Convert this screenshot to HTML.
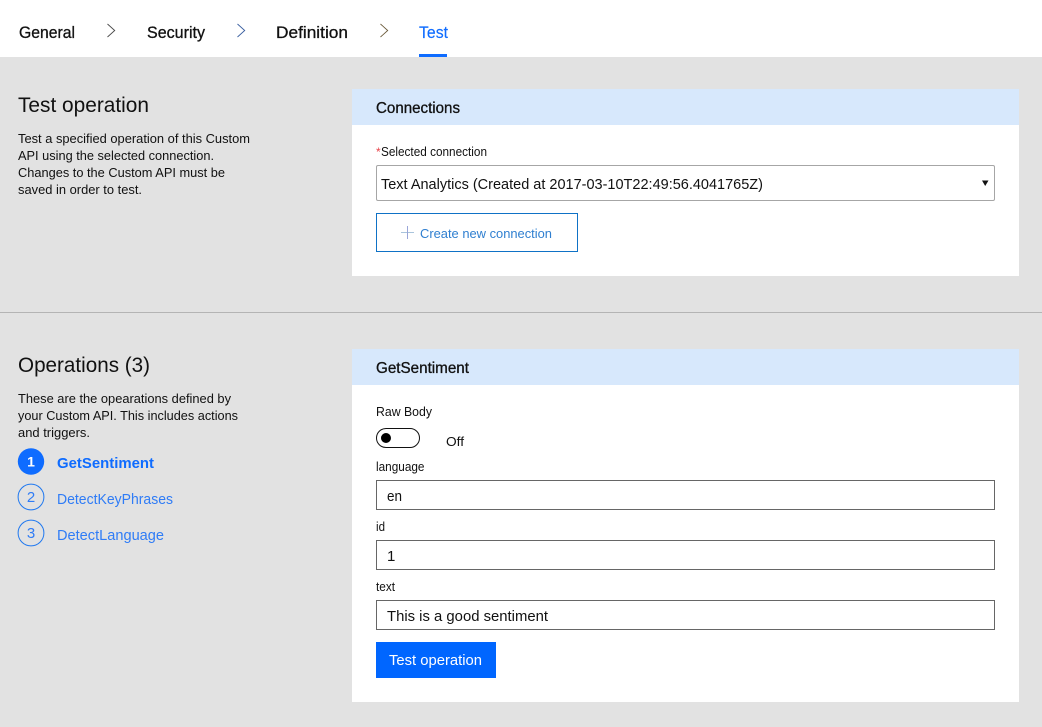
<!DOCTYPE html>
<html>
<head>
<meta charset="utf-8">
<title>Test operation</title>
<style>
html,body{margin:0;padding:0;width:1042px;height:727px;overflow:hidden;background:#e2e2e2}
svg{display:block}
text{font-family:"Liberation Sans",sans-serif;fill:#111}
.s{stroke:#111;stroke-width:.3px}
.b{fill:#0f6cff}
.bs{fill:#0f6cff;stroke:#0f6cff;stroke-width:.4px}
</style>
</head>
<body>
<svg width="1042" height="727" viewBox="0 0 1042 727" xmlns="http://www.w3.org/2000/svg">
<rect width="1042" height="727" fill="#e2e2e2"/>
<rect width="1042" height="57" fill="#fff"/>

<text class="s" x="19" y="38" font-size="16.5" textLength="56" lengthAdjust="spacingAndGlyphs">General</text>
<text class="s" x="147" y="38" font-size="16.5" textLength="58" lengthAdjust="spacingAndGlyphs">Security</text>
<text class="s" x="276" y="38" font-size="16.5" textLength="72" lengthAdjust="spacingAndGlyphs">Definition</text>
<text class="bs" x="419" y="38" font-size="16.5" textLength="29" lengthAdjust="spacingAndGlyphs" style="stroke-width:.15px">Test</text>
<rect x="419" y="54" width="28" height="3" fill="#0f6cff"/>
<path d="M107.5 24L114.7 30.5L107.5 37" fill="none" stroke="#4a4a4a" stroke-width=".9"/>
<path d="M237.5 24L244.7 30.5L237.5 37" fill="none" stroke="#3a5fa0" stroke-width=".9"/>
<path d="M380.5 24L387.7 30.5L380.5 37" fill="none" stroke="#6a5a3a" stroke-width=".9"/>

<text x="18" y="112" font-size="21" textLength="131" lengthAdjust="spacingAndGlyphs">Test operation</text>
<text x="18" y="143" font-size="12.5" textLength="232" lengthAdjust="spacingAndGlyphs">Test a specified operation of this Custom</text>
<text x="18" y="160" font-size="12.5" textLength="196" lengthAdjust="spacingAndGlyphs">API using the selected connection.</text>
<text x="18" y="177" font-size="12.5" textLength="207" lengthAdjust="spacingAndGlyphs">Changes to the Custom API must be</text>
<text x="18" y="194" font-size="12.5" textLength="124" lengthAdjust="spacingAndGlyphs">saved in order to test.</text>

<rect x="352" y="89" width="667" height="187" fill="#fff"/>
<rect x="352" y="89" width="667" height="36" fill="#d7e8fc"/>
<text class="s" x="376" y="113" font-size="15.5" textLength="84" lengthAdjust="spacingAndGlyphs">Connections</text>
<text x="376" y="156" font-size="12" style="fill:#e8434a">*</text>
<text x="381" y="156" font-size="12.5" textLength="106" lengthAdjust="spacingAndGlyphs">Selected connection</text>
<rect x="376.5" y="165.5" width="618" height="35" rx="1.5" fill="#fff" stroke="#a6a6a6"/>
<text x="381" y="189" font-size="15" textLength="382" lengthAdjust="spacingAndGlyphs">Text Analytics (Created at 2017-03-10T22:49:56.4041765Z)</text>
<path d="M982 180.5H988.5L985.2 186Z" fill="#111"/>
<rect x="376.5" y="213.5" width="201" height="38" fill="#fff" stroke="#0f72c6"/>
<path d="M401 232.5H414" stroke="#a9c4dc" stroke-width="1"/>
<path d="M407.5 226V239" stroke="#9aa6d8" stroke-width="1"/>
<text x="420" y="238" font-size="13" textLength="132" lengthAdjust="spacingAndGlyphs" style="fill:#2f7fd0">Create new connection</text>

<rect x="0" y="312" width="1042" height="1" fill="#b4b4b4"/>

<text x="18" y="372" font-size="21" textLength="132" lengthAdjust="spacingAndGlyphs">Operations (3)</text>
<text x="18" y="403" font-size="12.5" textLength="213" lengthAdjust="spacingAndGlyphs">These are the opearations defined by</text>
<text x="18" y="420" font-size="12.5" textLength="220" lengthAdjust="spacingAndGlyphs">your Custom API. This includes actions</text>
<text x="18" y="437" font-size="12.5" textLength="72" lengthAdjust="spacingAndGlyphs">and triggers.</text>

<circle cx="31" cy="461.5" r="13.2" fill="#0f6cff"/>
<text x="31" y="466.5" font-size="14" font-weight="bold" text-anchor="middle" style="fill:#fff">1</text>
<text class="bs" x="57" y="468" font-size="15" font-weight="bold" textLength="97" lengthAdjust="spacingAndGlyphs" style="stroke-width:0">GetSentiment</text>
<circle cx="31" cy="497" r="12.9" fill="none" stroke="#1f78f0" stroke-width="1"/>
<text class="b" x="31" y="502" font-size="15" text-anchor="middle" style="fill:#2f7cf6">2</text>
<text class="b" x="57" y="504" font-size="15" textLength="116" lengthAdjust="spacingAndGlyphs" style="fill:#2f7cf6">DetectKeyPhrases</text>
<circle cx="31" cy="533" r="12.9" fill="none" stroke="#1f78f0" stroke-width="1"/>
<text class="b" x="31" y="538" font-size="15" text-anchor="middle" style="fill:#2f7cf6">3</text>
<text class="b" x="57" y="540" font-size="15" textLength="107" lengthAdjust="spacingAndGlyphs" style="fill:#2f7cf6">DetectLanguage</text>

<rect x="352" y="349" width="667" height="353" fill="#fff"/>
<rect x="352" y="349" width="667" height="36" fill="#d7e8fc"/>
<text class="s" x="376" y="373" font-size="15.5" textLength="93" lengthAdjust="spacingAndGlyphs">GetSentiment</text>

<text x="376" y="416" font-size="12.5" textLength="56" lengthAdjust="spacingAndGlyphs">Raw Body</text>
<rect x="376.5" y="428.5" width="43" height="19" rx="9.5" fill="#fff" stroke="#111" stroke-width="1"/>
<circle cx="386" cy="438" r="5" fill="#000"/>
<text x="446" y="446" font-size="12.5" textLength="18" lengthAdjust="spacingAndGlyphs">Off</text>

<text x="376" y="471" font-size="12.5" textLength="48.5" lengthAdjust="spacingAndGlyphs">language</text>
<rect x="376.5" y="480.5" width="618" height="29" fill="#fff" stroke="#666"/>
<text x="387" y="501" font-size="15" textLength="15" lengthAdjust="spacingAndGlyphs">en</text>

<text x="376" y="531" font-size="12.5" textLength="9" lengthAdjust="spacingAndGlyphs">id</text>
<rect x="376.5" y="540.5" width="618" height="29" fill="#fff" stroke="#666"/>
<text x="387" y="561" font-size="15">1</text>

<text x="376" y="591" font-size="12.5" textLength="19" lengthAdjust="spacingAndGlyphs">text</text>
<rect x="376.5" y="600.5" width="618" height="29" fill="#fff" stroke="#666"/>
<text x="387" y="621" font-size="15" textLength="161" lengthAdjust="spacingAndGlyphs">This is a good sentiment</text>

<rect x="376" y="642" width="120" height="36" fill="#0066ff"/>
<text x="389" y="665" font-size="15" textLength="93" lengthAdjust="spacingAndGlyphs" style="fill:#fff">Test operation</text>
</svg>
</body>
</html>
